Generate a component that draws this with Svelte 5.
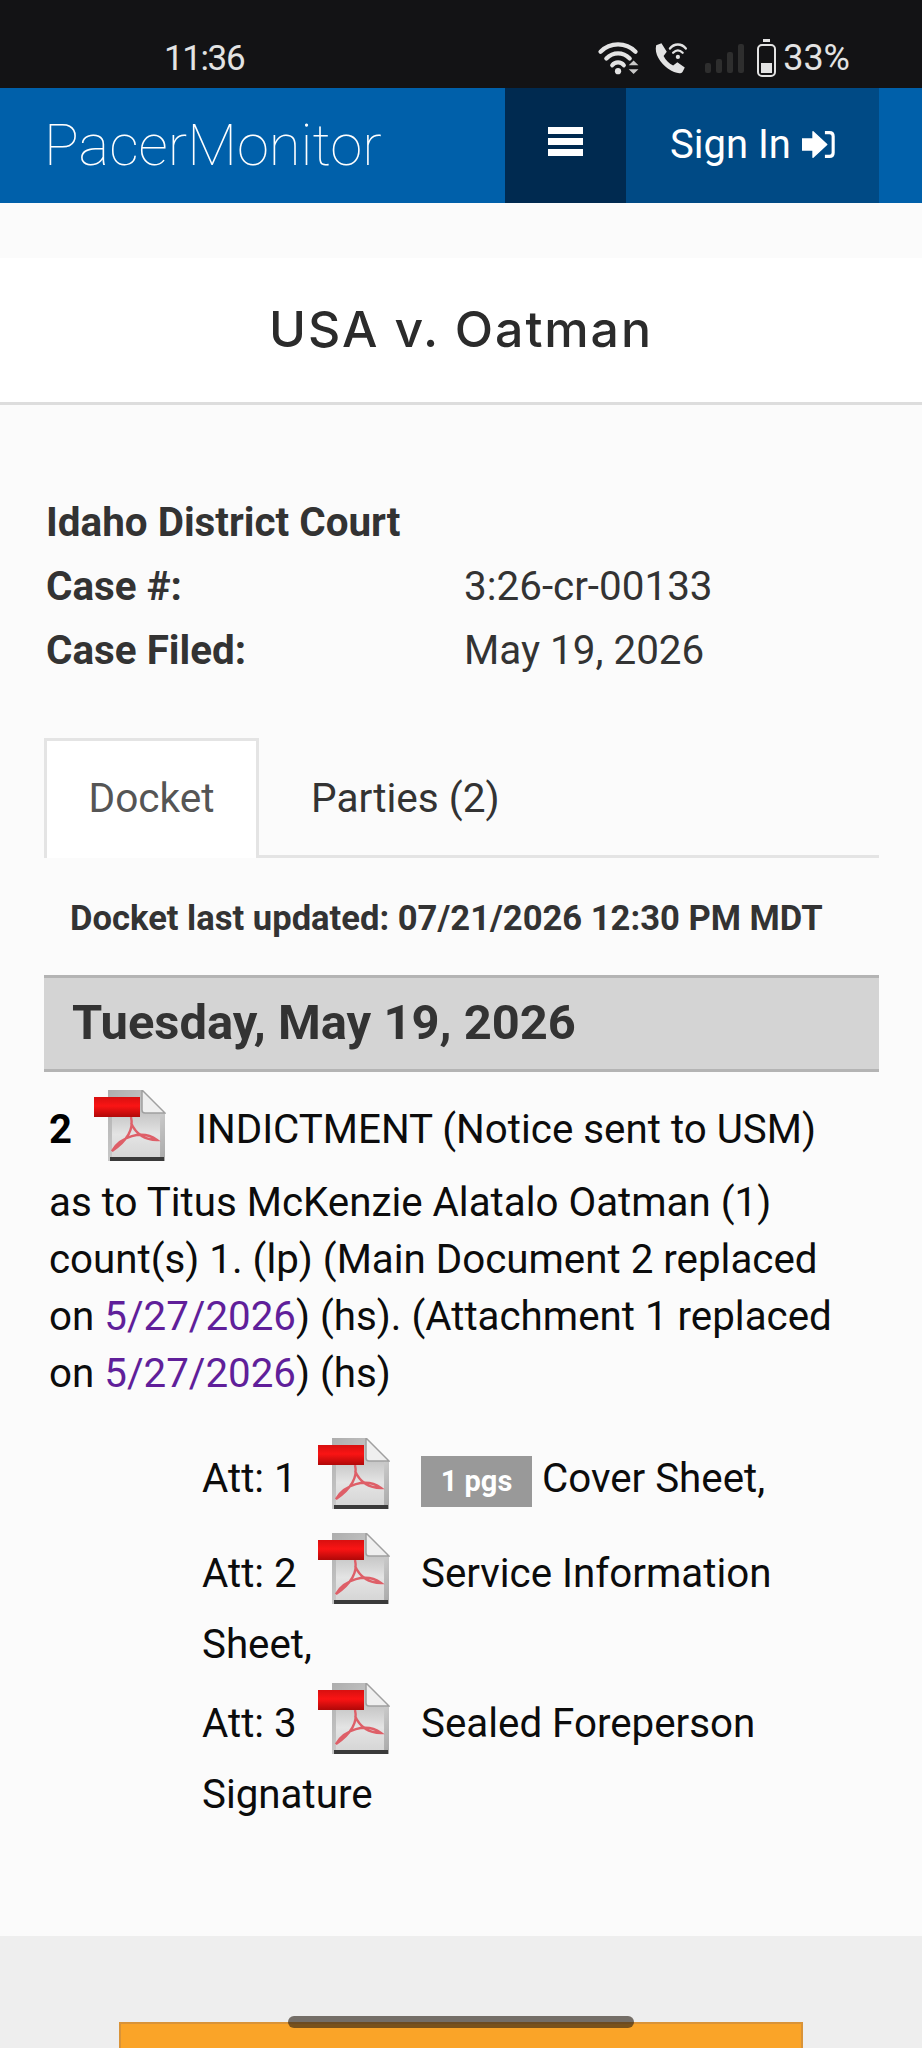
<script>
    const attachments = [
        { label: "Att: 1", pages: "1 pgs", before: "Cover Sheet,", rest: "" },
        { label: "Att: 2", pages: "", before: "Service Information", rest: "Sheet," },
        { label: "Att: 3", pages: "", before: "Sealed Foreperson", rest: "Signature" },
    ];
</script>

{#snippet pdfIcon()}
    <svg class="pdf" viewBox="0 0 72 72" aria-hidden="true">
        <defs>
            <linearGradient id="sheet" x1="0" y1="0" x2="1" y2="1">
                <stop offset="0" stop-color="#adadad" />
                <stop offset="0.6" stop-color="#cccccc" />
                <stop offset="1" stop-color="#a8a8a8" />
            </linearGradient>
            <linearGradient id="inner" x1="0" y1="0" x2="0" y2="1">
                <stop offset="0" stop-color="#c4c4c4" />
                <stop offset="0.5" stop-color="#e4e4e4" />
                <stop offset="1" stop-color="#d6d6d6" />
            </linearGradient>
            <linearGradient id="band" x1="0" y1="0" x2="0" y2="1">
                <stop offset="0" stop-color="#d81010" />
                <stop offset="0.45" stop-color="#fa1414" />
                <stop offset="1" stop-color="#b00808" />
            </linearGradient>
        </defs>
        <path d="M14 0 H48 L71 23 V71 H14 Z" fill="url(#sheet)" />
        <path d="M18 22 H66 V67 H18 Z" fill="url(#inner)" />
        <path d="M48 0 L71 23 H51 Q48 23 48 20 Z" fill="#efefef" stroke="#a0a0a0" stroke-width="1.5" />
        <rect x="16" y="67" width="54" height="4" fill="#3a3a3a" />
        <path d="M37 27 C40 39 34 50 18 61 C26 47 48 39 63 50 C50 50 42 44 37 33" fill="none" stroke="#de5f68" stroke-width="2.4" />
        <rect x="0" y="7" width="46" height="20" fill="url(#band)" />
    </svg>
{/snippet}

<div class="page">
    <div class="statusbar">
        <span class="time">11:36</span>
        <div class="status-icons">
            <svg class="wifi" viewBox="0 0 44 36" aria-hidden="true">
                <path d="M3 11 C13 1 29 1 39 11" fill="none" stroke="#e3e3e3" stroke-width="4.4" stroke-linecap="round" />
                <path d="M9 18 C16 11 26 11 33 18" fill="none" stroke="#e3e3e3" stroke-width="4.4" stroke-linecap="round" />
                <path d="M15 25 C18 21 24 21 27 25" fill="none" stroke="#e3e3e3" stroke-width="4.2" stroke-linecap="round" />
                <circle cx="21" cy="31" r="3.2" fill="#e3e3e3" />
                <path d="M32 25 L37 20 L42 25 Z M32 29 L42 29 L37 34 Z" fill="#c8c8c8" />
            </svg>
            <svg class="call" viewBox="0 0 34 32" aria-hidden="true">
                <path d="M3 4 L8 2 L13 10 L10 14 C12 18 15 21 19 23 L23 20 L30 25 L28 29 C26 32 20 30 14 26 C7 21 1 12 3 4 Z" fill="#e3e3e3" />
                <path d="M16 7 C20 2 27 2 31 7 M19 11 C22 8 25 8 28 11" fill="none" stroke="#e3e3e3" stroke-width="2.2" stroke-linecap="round" />
                <circle cx="23.5" cy="15" r="2" fill="#e3e3e3" />
            </svg>
            <div class="signal">
                <i style="height:10px"></i>
                <i style="height:14px"></i>
                <i style="height:21px"></i>
                <i style="height:29px"></i>
            </div>
            <div class="battery"><i></i></div>
            <span class="percent">33%</span>
        </div>
    </div>

    <header class="topbar">
        <div class="logo">PacerMonitor</div>
        <button class="menu" aria-label="Menu"><i></i><i></i><i></i></button>
        <button class="signin">
            Sign In
            <svg viewBox="0 0 36 30" aria-hidden="true">
                <path d="M0 9 H12 V1 L27 15 L12 29 V21 H0 Z" fill="#fff" stroke="#fff" stroke-width="1.5" stroke-linejoin="round" />
                <path d="M25 2 H30 Q34 2 34 6 V24 Q34 28 30 28 H25" fill="none" stroke="#fff" stroke-width="3.4" />
            </svg>
        </button>
    </header>

    <div class="title-wrap"><h1>USA v. Oatman</h1></div>

    <section class="case-info">
        <div class="court">Idaho District Court</div>
        <div class="row"><b>Case #:</b><span>3:26-cr-00133</span></div>
        <div class="row"><b>Case Filed:</b><span>May 19, 2026</span></div>
    </section>

    <nav class="tabs">
        <div class="tab active">Docket</div>
        <div class="tab">Parties (2)</div>
    </nav>

    <p class="updated">Docket last updated: 07/21/2026 12:30 PM MDT</p>

    <h2 class="date">Tuesday, May 19, 2026</h2>

    <div class="entry">
        <div class="entry-first">
            <b class="num">2</b>
            {@render pdfIcon()}
            <span>INDICTMENT (Notice sent to USM)</span>
        </div>
        as to Titus McKenzie Alatalo Oatman (1) count(s) 1. (lp) (Main Document 2 replaced on <a href="#d">5/27/2026</a>) (hs). (Attachment 1 replaced on <a href="#d">5/27/2026</a>) (hs)
    </div>

    <div class="attachments">
        {#each attachments as att}
            <div class="att">
                <div class="att-first">
                    <span class="att-label">{att.label}</span>
                    {@render pdfIcon()}
                    {#if att.pages}<span class="badge">{att.pages}</span>{/if}
                    <span>{att.before}</span>
                </div>
                {#if att.rest}<div class="att-rest">{att.rest}</div>{/if}
            </div>
        {/each}
    </div>

    <footer class="foot">
        <div class="cta"></div>
    </footer>

    <div class="homebar"></div>
</div>

<style>
    :global(body) {
        margin: 0;
        background: #fbfbfb;
    }

    .page {
        position: relative;
        width: 922px;
        height: 2048px;
        overflow: hidden;
        background: #fbfbfb;
        font-family: Roboto, "Liberation Sans", sans-serif;
        color: #333;
    }

    .statusbar {
        height: 88px;
        background: #131315;
        color: #e3e3e3;
        display: flex;
        align-items: center;
        justify-content: space-between;
        padding: 0 72px 0 164px;
        box-sizing: border-box;
        font-size: 35px;
    }

    .time {
        margin-top: 30px;
        line-height: 32px;
        letter-spacing: -1.4px;
    }

    .status-icons {
        display: flex;
        align-items: center;
        margin-top: 28px;
    }

    .wifi {
        width: 44px;
        height: 35px;
    }

    .call {
        width: 36px;
        height: 34px;
        margin-left: 12px;
    }

    .signal {
        display: flex;
        align-items: flex-end;
        gap: 5px;
        height: 30px;
        margin-left: 16px;
    }

    .signal i {
        width: 6px;
        background: #2e2e2e;
        border-radius: 2px;
    }

    .battery {
        width: 19px;
        height: 33px;
        border: 2.5px solid #e3e3e3;
        border-radius: 5px;
        position: relative;
        box-sizing: border-box;
        margin-left: 13px;
        margin-top: 5px;
    }

    .battery::before {
        content: "";
        position: absolute;
        left: 3.5px;
        top: -7px;
        width: 7px;
        height: 2.5px;
        background: #e3e3e3;
    }

    .battery i {
        position: absolute;
        left: 2px;
        right: 2px;
        bottom: 2px;
        height: 10px;
        background: #e3e3e3;
    }

    .percent {
        line-height: 32px;
        margin-left: 7px;
        font-size: 36px;
    }

    .topbar {
        height: 115px;
        background: #0060aa;
        display: flex;
        align-items: stretch;
        padding-right: 43px;
    }

    .logo {
        flex: 1;
        padding: 0 0 2px 44px;
        align-self: center;
        font-size: 58px;
        font-weight: 100;
        color: #fff;
    }

    .topbar button {
        border: 0;
        color: #fff;
        font-family: inherit;
        padding: 0;
    }

    .menu {
        width: 121px;
        background: #002a50;
        display: flex;
        flex-direction: column;
        align-items: center;
        justify-content: center;
        gap: 4px;
        padding-bottom: 8px !important;
    }

    .menu i {
        width: 35px;
        height: 7px;
        background: #fff;
    }

    .signin {
        width: 253px;
        background: #004a85;
        font-size: 40px;
        display: flex;
        align-items: center;
        justify-content: center;
        gap: 11px;
        padding-bottom: 2px !important;
    }

    .signin svg {
        width: 33px;
        height: 29px;
    }

    .title-wrap {
        margin-top: 55px;
        height: 147px;
        background: #fff;
        border-bottom: 3px solid #ddd;
        box-sizing: border-box;
        display: flex;
        align-items: center;
        justify-content: center;
        padding-bottom: 2px;
    }

    h1 {
        margin: 0;
        font-family: Inter, sans-serif;
        font-size: 50px;
        font-weight: 500;
        color: #2b2b2b;
        letter-spacing: 1.9px;
    }

    .case-info {
        margin-top: 86px;
        padding-left: 46px;
        font-size: 40.4px;
        line-height: 64px;
    }

    .court {
        font-weight: 700;
    }

    .row {
        display: grid;
        grid-template-columns: 418px 1fr;
    }

    .tabs {
        margin: 55px 43px 0 44px;
        height: 120px;
        box-sizing: border-box;
        border-bottom: 3px solid #e4e4e4;
        display: flex;
        font-size: 40.6px;
    }

    .tab {
        height: 120px;
        box-sizing: border-box;
        padding: 0 52px;
        line-height: 121px;
        color: #333;
    }

    .tab.active {
        width: 215px;
        padding: 0;
        text-align: center;
        background: #fff;
        border: 3px solid #e4e4e4;
        border-bottom: 0;
        color: #555;
        line-height: 114px;
    }

    .updated {
        margin: 0;
        padding: 37px 0 0 70px;
        font-size: 34.6px;
        font-weight: 700;
        line-height: 46px;
    }

    .date {
        margin: 34px 43px 0 44px;
        height: 97px;
        box-sizing: border-box;
        background: #d4d4d4;
        border-top: 3px solid #b4b4b4;
        border-bottom: 3px solid #b4b4b4;
        padding-left: 28px;
        font-size: 48.9px;
        font-weight: 700;
        line-height: 89px;
    }

    .entry {
        margin: 14px 72px 0 49px;
        font-size: 40.3px;
        line-height: 57px;
        color: #0c0c0c;
    }

    .entry-first {
        display: flex;
        align-items: center;
        height: 88px;
    }

    .num {
        font-size: 40px;
        color: #000;
        width: 45px;
        margin-bottom: 2px;
    }

    .pdf {
        width: 72px;
        height: 72px;
        flex: none;
        margin-bottom: 8px;
        filter: blur(0.7px);
    }

    .entry-first span {
        margin-left: 30px;
        margin-bottom: 2px;
        white-space: nowrap;
    }

    a {
        color: #601f9a;
        text-decoration: none;
    }

    .attachments {
        margin-top: 34px;
        padding-left: 202px;
        font-size: 40.3px;
        line-height: 57px;
        color: #0c0c0c;
    }

    .att {
        margin-bottom: 10px;
    }

    .att-first {
        display: flex;
        align-items: center;
        height: 85px;
    }

    .att-label {
        width: 116px;
    }

    .att .pdf {
        margin-right: 31px;
        margin-bottom: 10px;
    }

    .att-rest {
        margin-bottom: -2px;
    }

    .badge {
        background: #999;
        color: #fff;
        font-size: 29px;
        font-weight: 700;
        width: 111px;
        height: 51px;
        line-height: 51px;
        text-align: center;
        margin: 6px 10px 0 0;
    }

    .foot {
        position: absolute;
        left: 0;
        right: 0;
        top: 1936px;
        bottom: 0;
        background: #eee;
    }

    .cta {
        position: absolute;
        left: 119px;
        width: 684px;
        top: 86px;
        height: 40px;
        box-sizing: border-box;
        background: #faa428;
        border: 2px solid #d99338;
        border-bottom: 0;
    }

    .homebar {
        position: absolute;
        left: 288px;
        top: 2016px;
        width: 346px;
        height: 12px;
        border-radius: 6px;
        background: rgba(40, 30, 20, 0.62);
    }
</style>
